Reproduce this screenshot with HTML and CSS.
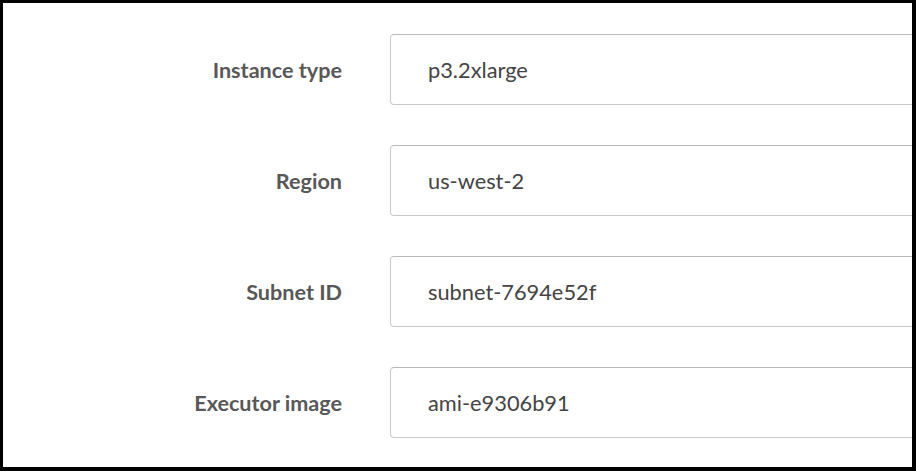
FILE: index.html
```html
<!DOCTYPE html>
<html lang="en">
<head>
    <meta charset="UTF-8">
    <meta name="viewport" content="width=device-width, initial-scale=1.0">
    <title>Executor Settings</title>
    <link rel="stylesheet" href="styles.css">
</head>
<body>
    <div class="panel">
        <form class="settings-form">
            <label for="instanceType">Instance type</label>
            <input type="text" id="instanceType" value="p3.2xlarge">

            <label for="region">Region</label>
            <input type="text" id="region" value="us-west-2">

            <label for="subnetId">Subnet ID</label>
            <input type="text" id="subnetId" value="subnet-7694e52f">

            <label for="executorImage">Executor image</label>
            <input type="text" id="executorImage" value="ami-e9306b91">
        </form>
    </div>
</body>
</html>
```

FILE: styles.css
```css
/* General Styles */
html, body {
    height: 100%;
}

body {
    margin: 0;
    padding: 3px 4px 4px 3px;
    box-sizing: border-box;
    background: #000;
    font-family: Lato, "Open Sans", sans-serif;
    overflow: hidden;
}

.panel {
    background: #fff;
    height: 100%;
    overflow: hidden;
    padding-top: 31px;
    box-sizing: border-box;
}

/* Form */
.settings-form {
    display: grid;
    grid-template-columns: 339px 1fr;
    grid-auto-rows: 71px;
    column-gap: 48px;
    row-gap: 40px;
    align-items: center;
}

.settings-form label {
    text-align: right;
    font-size: 21.6px;
    font-weight: bold;
    color: #585858;
}

.settings-form input {
    width: calc(100% + 20px);
    height: 71px;
    box-sizing: border-box;
    padding: 0 0 0 37px;
    font-family: inherit;
    font-size: 21.8px;
    color: #444;
    background: #fff;
    border: 1px solid #c9c9c9;
    border-top-color: #b9b9b9;
    border-radius: 4px;
    outline: none;
}
```
